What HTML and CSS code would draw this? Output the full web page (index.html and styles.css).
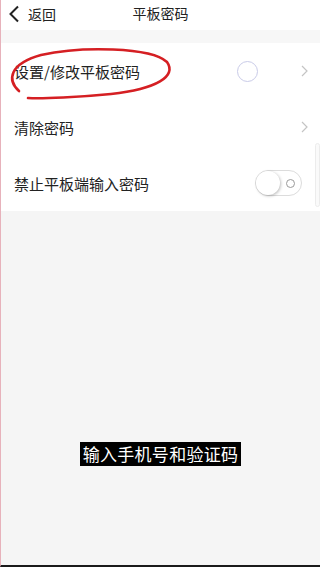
FILE: index.html
```html
<!DOCTYPE html>
<html lang="zh">
<head>
<meta charset="utf-8">
<link rel="stylesheet" href="styles.css">
</head>
<body>
<div class="screen">
  <header class="nav">
    <div class="back">
      <svg class="back-ico" width="12" height="18" viewBox="0 0 12 18"><path d="M10 1.5 L2.5 9 L10 16.5" fill="none" stroke="#222" stroke-width="2"/></svg>
      <span>返回</span>
    </div>
    <div class="title">平板密码</div>
  </header>
  <div class="gap"></div>
  <section class="list">
    <div class="row">
      <span class="label">设置/修改平板密码</span>
      <span class="ring"></span>
      <svg class="chev" width="7" height="12" viewBox="0 0 7 12"><path d="M1 1 L6 6 L1 11" fill="none" stroke="#c4c4c4" stroke-width="1.2"/></svg>
      <svg class="mark" width="180" height="60" viewBox="0 0 180 60"><path d="M18 47 C 6 36, 8 20, 40 11 C 80 2, 150 3, 166 18 C 176 32, 156 45, 110 50 C 80 53, 40 55, 27 54" fill="none" stroke="#d51f23" stroke-width="2.6" stroke-linecap="round"/></svg>
    </div>
    <div class="row">
      <span class="label">清除密码</span>
      <svg class="chev" width="7" height="12" viewBox="0 0 7 12"><path d="M1 1 L6 6 L1 11" fill="none" stroke="#c4c4c4" stroke-width="1.2"/></svg>
    </div>
    <div class="row">
      <span class="label">禁止平板端输入密码</span>
      <span class="toggle"><span class="knob"></span><span class="dot"></span></span>
    </div>
    <div class="scroll"></div>
  </section>
  <div class="rest">
    <div class="caption">输入手机号和验证码</div>
  </div>
</div>
</body>
</html>
```
FILE: styles.css
```css
* { box-sizing: border-box; }
html, body { margin: 0; padding: 0; }
body {
  width: 320px; height: 567px; overflow: hidden;
  font-family: "Noto Sans CJK SC", "Noto Sans", sans-serif;
  color: #222;
  background: #f5f5f5;
}
.screen {
  height: 567px;
  display: flex; flex-direction: column;
  border-left: 1px solid #e7b2bb;
  border-bottom: 2px solid #1a1a1a;
  background: #f5f5f5;
}
.nav {
  height: 30px; background: #fff;
  position: relative;
  display: flex; align-items: center;
}
.back {
  display: flex; align-items: center; gap: 8px;
  padding-left: 7px; font-size: 14px; height: 100%;
}
.back-ico { margin-top: -2px; }
.back span { margin-top: -3px; }
.title {
  position: absolute; left: 0; right: 0; top: 0; height: 100%;
  text-align: center; font-size: 14px; line-height: 26px; padding-left: 0;
}
.gap { height: 13px; background: #f7f7f7; }
.list { background: #fff; position: relative; }
.row {
  height: 56px; display: flex; align-items: center;
  padding: 0 12px 0 13px; position: relative;
}
.label { font-size: 15px; flex: 1; }
.ring {
  width: 21px; height: 21px; border-radius: 50%;
  border: 1.5px solid #c9cbe8; margin-right: 43px;
}
.chev { display: block; }
.mark { position: absolute; left: 0; top: 1px; }
.toggle {
  width: 47px; height: 26px; border-radius: 13px;
  border: 1px solid #dcdcdc; background: #fff;
  position: relative; margin-right: 6px;
}
.knob {
  position: absolute; left: 0; top: 0;
  width: 24px; height: 24px; border-radius: 50%;
  background: #fff; box-shadow: 1px 1px 3px rgba(0,0,0,0.25);
}
.dot {
  position: absolute; right: 6px; top: 8px;
  width: 9px; height: 9px; border-radius: 50%;
  border: 1px solid #9a9a9a;
}
.scroll {
  position: absolute; right: 0; top: 100px;
  width: 5px; height: 64px; border-radius: 3px;
  border: 1px solid #ececec; background: #fafafa;
}
.rest {
  flex: 1; display: flex; justify-content: center;
  padding-top: 231px;
}
.caption {
  height: 24px; background: #000; color: #fff;
  font-size: 17px; line-height: 24px; padding: 0 3px;
  letter-spacing: 0.3px; align-self: flex-start;
}
```
